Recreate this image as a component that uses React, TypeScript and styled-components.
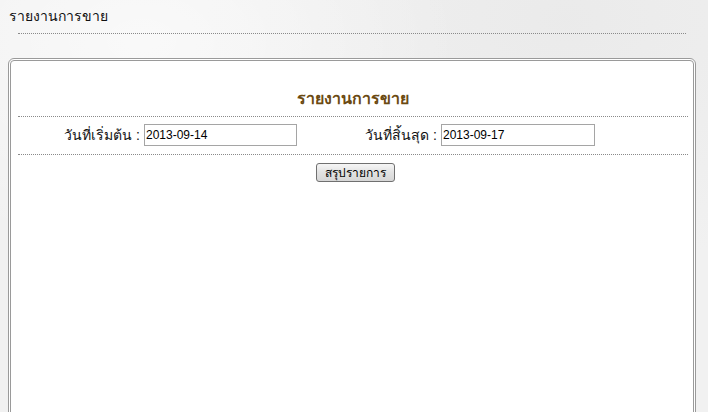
import React from "react";
import styled, { createGlobalStyle } from "styled-components";

const Global = createGlobalStyle`
  html, body {
    margin: 0;
    padding: 0;
  }
  body {
    background: #f1f1f1;
    background-image:
      radial-gradient(ellipse at 20% 10%, rgba(255,255,255,0.6), rgba(255,255,255,0) 40%),
      radial-gradient(ellipse at 80% 5%, rgba(230,230,230,0.6), rgba(230,230,230,0) 45%);
    font-family: Tahoma, "Liberation Sans", "Noto Sans", "DejaVu Sans", sans-serif;
    color: #111;
    height: 412px;
    overflow: hidden;
  }
`;

const Page = styled.div`
  padding: 7px 12px 0 8px;
`;

const TopTitle = styled.div`
  font-size: 14px;
  line-height: 18px;
  padding-left: 1px;
  color: #111;
`;

const Rule = styled.div<{ $inset?: string }>`
  border-top: 1px dotted #8a8a8a;
  height: 0;
  margin: ${(p) => p.$inset ?? "0"};
`;

const Panel = styled.section`
  margin-top: 24px;
  border: 3px double #9a9a9a;
  border-radius: 6px;
  background: #fff;
  height: 360px;
  padding: 0 5px 0 7px;
`;

const Heading = styled.h2`
  margin: 0;
  padding: 28px 0 7px;
  text-align: center;
  font-size: 16px;
  line-height: 20px;
  font-weight: bold;
  color: #6b4a12;
`;

const FormRow = styled.div`
  display: grid;
  grid-template-columns: 126px 153px 144px 154px;
  align-items: center;
  padding: 7px 0 8px;
`;

const Label = styled.label`
  text-align: right;
  padding-right: 4px;
  font-size: 14px;
  color: #111;
  white-space: nowrap;
`;

const DateInput = styled.input`
  box-sizing: border-box;
  width: 100%;
  height: 22px;
  margin: 0;
  border: 1px solid #a5a5a5;
  padding: 1px 1px;
  font-family: "Liberation Sans", Arial, sans-serif;
  font-size: 12px;
  color: #000;
  background: #fff;
  outline: none;
`;

const Actions = styled.div`
  display: flex;
  justify-content: center;
  padding-top: 8px;
`;

const Button = styled.button`
  box-sizing: border-box;
  height: 19px;
  padding: 0 8px;
  margin-left: 4px;
  border: 1px solid #707070;
  border-radius: 3px;
  background: linear-gradient(#f6f6f6, #e2e2e2 50%, #d6d6d6);
  font-family: Tahoma, "Liberation Sans", "Noto Sans", sans-serif;
  font-size: 12px;
  line-height: 16px;
  color: #000;
`;

export default function App() {
  return (
    <>
      <Global />
      <Page>
        <TopTitle>รายงานการขาย</TopTitle>
        <Rule $inset="8px 10px 0 10px" />
        <Panel>
          <Heading>รายงานการขาย</Heading>
          <Rule />
          <FormRow>
            <Label htmlFor="start">วันที่เริ่มต้น :</Label>
            <DateInput id="start" defaultValue="2013-09-14" />
            <Label htmlFor="end">วันที่สิ้นสุด :</Label>
            <DateInput id="end" defaultValue="2013-09-17" />
          </FormRow>
          <Rule />
          <Actions>
            <Button>สรุปรายการ</Button>
          </Actions>
        </Panel>
      </Page>
    </>
  );
}
